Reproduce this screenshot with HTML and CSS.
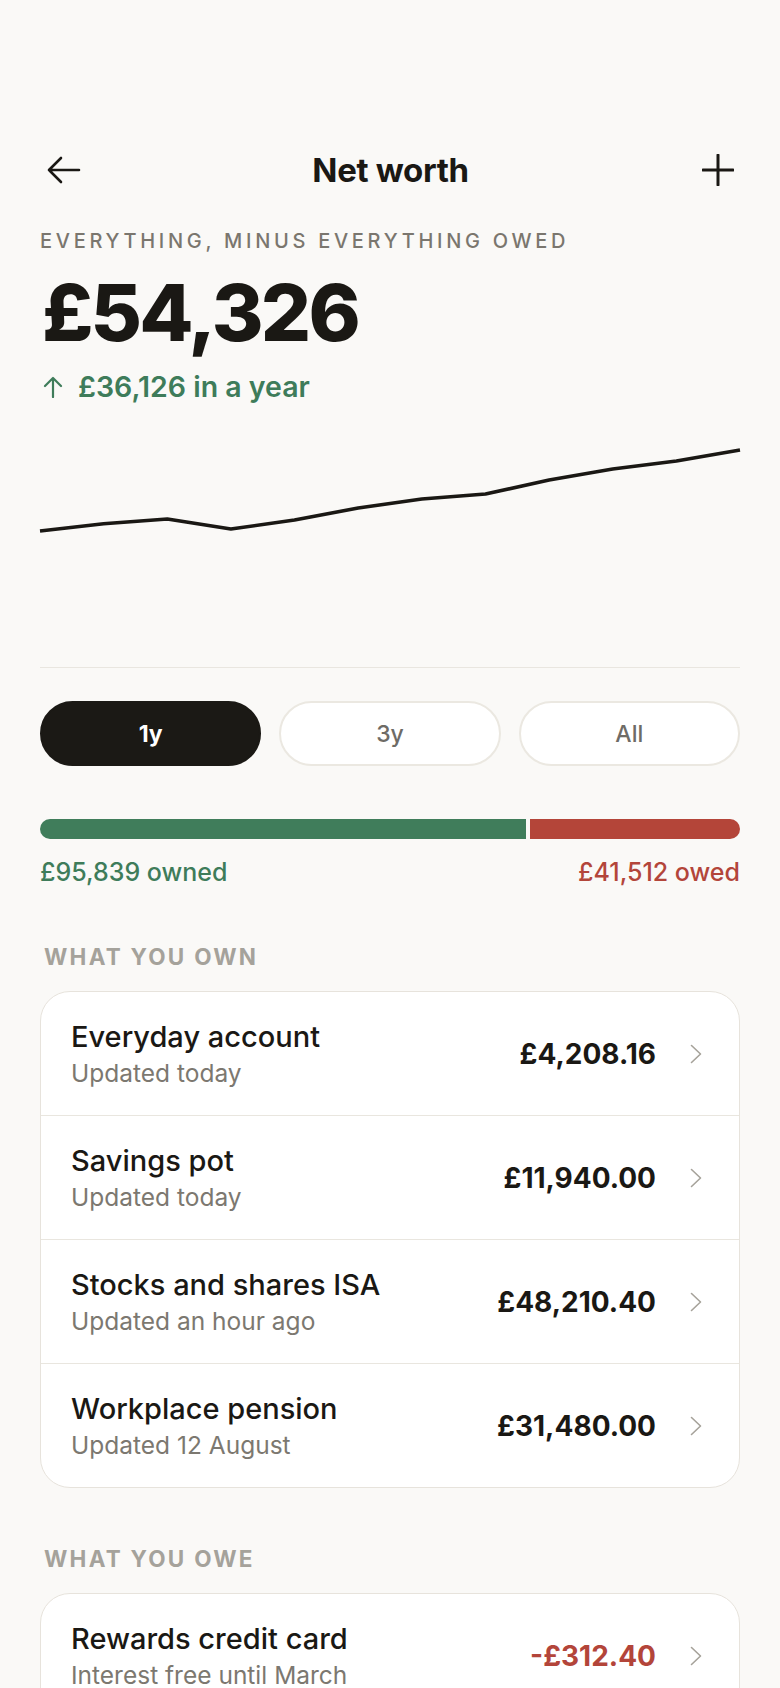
FILE: index.html
```html
<!DOCTYPE html>
<html lang="en">
<head>
<meta charset="utf-8">
<title>Net worth</title>
<link rel="stylesheet" href="styles.css">
</head>
<body>
<main class="page">
  <header class="topbar">
    <button class="icon-btn" aria-label="Back">
      <svg width="34" height="28" viewBox="0 0 34 28"><path d="M32 14H2M14 2L2 14l12 12" fill="none" stroke="#1a1814" stroke-width="2.6" stroke-linecap="round" stroke-linejoin="round"/></svg>
    </button>
    <h1 class="title">Net worth</h1>
    <button class="icon-btn" aria-label="Add">
      <svg width="32" height="32" viewBox="0 0 32 32"><path d="M16 1v30M1 16h30" fill="none" stroke="#1a1814" stroke-width="3" stroke-linecap="round"/></svg>
    </button>
  </header>

  <p class="eyebrow">EVERYTHING, MINUS EVERYTHING OWED</p>
  <p class="total">£54,326</p>
  <p class="change">
    <svg width="20" height="22" viewBox="0 0 20 22"><path d="M10 21V2M2 10l8-8 8 8" fill="none" stroke="#3e7c5a" stroke-width="2.2" stroke-linecap="round" stroke-linejoin="round"/></svg>
    <span>£36,126 in a year</span>
  </p>

  <div class="chart">
    <svg width="700" height="246" viewBox="0 0 700 246">
      <polyline fill="none" stroke="#1a1814" stroke-width="3.6" stroke-linejoin="round" stroke-linecap="butt"
        points="0,110 63.6,102.7 127.3,98 190.9,108 254.5,99 318.2,87 381.8,78 445.5,73 509.1,59 572.7,48 636.4,40 700,29"/>
    </svg>
  </div>

  <div class="ranges">
    <button class="range active">1y</button>
    <button class="range">3y</button>
    <button class="range">All</button>
  </div>

  <div class="split">
    <div class="split-own" style="flex-grow:95839"></div>
    <div class="split-owe" style="flex-grow:41512"></div>
  </div>
  <div class="split-labels">
    <span class="own">£95,839 owned</span>
    <span class="owe">£41,512 owed</span>
  </div>

  <h2 class="section">WHAT YOU OWN</h2>
  <ul class="card">
    <li class="row">
      <div class="row-text"><span class="row-title">Everyday account</span><span class="row-sub">Updated today</span></div>
      <span class="amount">£4,208.16</span>
      <svg class="chev" width="12" height="20" viewBox="0 0 12 20"><path d="M1.5 1.5L10.5 10l-9 8.5" fill="none" stroke="#a6a29a" stroke-width="1.6" stroke-linecap="round" stroke-linejoin="round"/></svg>
    </li>
    <li class="row">
      <div class="row-text"><span class="row-title">Savings pot</span><span class="row-sub">Updated today</span></div>
      <span class="amount">£11,940.00</span>
      <svg class="chev" width="12" height="20" viewBox="0 0 12 20"><path d="M1.5 1.5L10.5 10l-9 8.5" fill="none" stroke="#a6a29a" stroke-width="1.6" stroke-linecap="round" stroke-linejoin="round"/></svg>
    </li>
    <li class="row">
      <div class="row-text"><span class="row-title">Stocks and shares ISA</span><span class="row-sub">Updated an hour ago</span></div>
      <span class="amount">£48,210.40</span>
      <svg class="chev" width="12" height="20" viewBox="0 0 12 20"><path d="M1.5 1.5L10.5 10l-9 8.5" fill="none" stroke="#a6a29a" stroke-width="1.6" stroke-linecap="round" stroke-linejoin="round"/></svg>
    </li>
    <li class="row">
      <div class="row-text"><span class="row-title">Workplace pension</span><span class="row-sub">Updated 12 August</span></div>
      <span class="amount">£31,480.00</span>
      <svg class="chev" width="12" height="20" viewBox="0 0 12 20"><path d="M1.5 1.5L10.5 10l-9 8.5" fill="none" stroke="#a6a29a" stroke-width="1.6" stroke-linecap="round" stroke-linejoin="round"/></svg>
    </li>
  </ul>

  <h2 class="section">WHAT YOU OWE</h2>
  <ul class="card">
    <li class="row">
      <div class="row-text"><span class="row-title">Rewards credit card</span><span class="row-sub">Interest free until March</span></div>
      <span class="amount negative">-£312.40</span>
      <svg class="chev" width="12" height="20" viewBox="0 0 12 20"><path d="M1.5 1.5L10.5 10l-9 8.5" fill="none" stroke="#a6a29a" stroke-width="1.6" stroke-linecap="round" stroke-linejoin="round"/></svg>
    </li>
  </ul>
</main>
</body>
</html>
```

FILE: styles.css
```css
* { box-sizing: border-box; }
html, body { margin: 0; padding: 0; }
body {
  background: #faf9f7;
  color: #1a1814;
  font-family: Inter, "Noto Sans", "Liberation Sans", sans-serif;
}
p, h1, h2, ul { margin: 0; padding: 0; }
ul { list-style: none; }
button { font-family: inherit; border: 0; background: none; padding: 0; cursor: pointer; }

.page {
  padding: 142px 40px 0;
}

.topbar {
  height: 56px;
  display: flex;
  align-items: center;
  justify-content: space-between;
}
.icon-btn {
  width: 42px;
  height: 40px;
  display: flex;
  align-items: center;
  justify-content: center;
}
.icon-btn:first-child { margin-left: 7px; justify-content: flex-start; }
.icon-btn:last-child { justify-content: flex-end; margin-right: 6px; }
.title {
  font-size: 33px;
  font-weight: 700;
  letter-spacing: -0.01em;
}

.eyebrow {
  margin-top: 31px;
  font-size: 20px;
  line-height: 24px;
  font-weight: 500;
  letter-spacing: 0.185em;
  color: #7a766e;
}
.total {
  margin-top: 20px;
  font-size: 79px;
  line-height: 78px;
  font-weight: 800;
  letter-spacing: -0.035em;
  margin-left: 2px;
}
.change {
  margin-top: 18px;
  display: flex;
  align-items: center;
  gap: 15px;
  color: #3e7c5a;
  font-size: 28.5px;
  line-height: 36px;
  font-weight: 600;
  padding-left: 3px;
}
.change svg { display: block; }

.chart {
  margin-top: 16px;
  height: 247px;
  border-bottom: 1px solid #e9e6e0;
}
.chart svg { display: block; overflow: visible; }

.ranges {
  margin-top: 33px;
  display: grid;
  grid-template-columns: repeat(3, 1fr);
  gap: 18px;
}
.range {
  height: 65px;
  border-radius: 33px;
  background: #ffffff;
  border: 2px solid #ebe8e1;
  color: #6e6b66;
  font-size: 23px;
  font-weight: 500;
}
.range.active {
  background: #1b1915;
  border-color: #1b1915;
  color: #ffffff;
  font-weight: 700;
}

.split {
  margin-top: 53px;
  height: 20px;
  display: flex;
  gap: 4px;
}
.split-own { background: #407d5b; border-radius: 10px 0 0 10px; }
.split-owe { background: #b44539; border-radius: 0 10px 10px 0; }
.split-labels {
  margin-top: 19px;
  display: flex;
  justify-content: space-between;
  font-size: 25px;
  line-height: 28px;
  font-weight: 500;
}
.own { color: #3e7c5a; }
.owe { color: #b3453a; }

.section {
  margin-top: 57px;
  padding-left: 4px;
  font-size: 22.5px;
  line-height: 28px;
  font-weight: 700;
  letter-spacing: 0.1em;
  color: #a5a29b;
}

.card {
  margin-top: 20px;
  background: #ffffff;
  border: 1.5px solid #e7e3dc;
  border-radius: 30px;
  overflow: hidden;
}
.row {
  height: 124px;
  display: flex;
  align-items: center;
  padding: 0 37px 0 30px;
  border-top: 1.5px solid #e9e6df;
}
.row:first-child { border-top: 0; height: 123px; }
.row-text {
  flex: 1;
  display: flex;
  flex-direction: column;
  gap: 4px;
}
.row-title {
  font-size: 29px;
  line-height: 34px;
  font-weight: 500;
  color: #1a1814;
}
.row-sub {
  font-size: 24.5px;
  line-height: 30px;
  color: #7c7870;
}
.amount {
  font-size: 28px;
  font-weight: 700;
  color: #1a1814;
}
.amount.negative { color: #b3453a; }
.chev { margin-left: 34px; display: block; }
```
